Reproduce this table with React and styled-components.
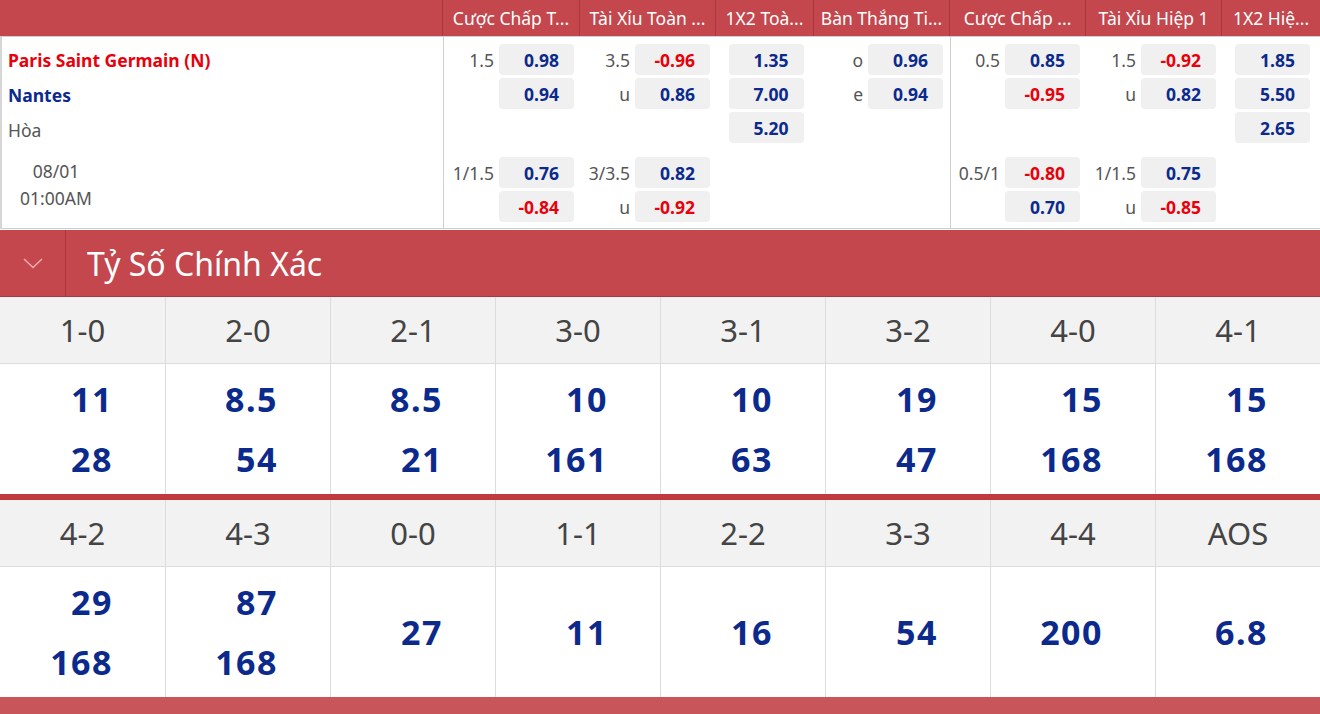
import React from 'react';
import styled, { createGlobalStyle } from 'styled-components';

const Global = createGlobalStyle`
  html, body {
    margin: 0;
    padding: 0;
    background: #fff;
  }
  body {
    font-family: "Noto Sans", "Open Sans", Arial, sans-serif;
    overflow: hidden;
  }
`;

const RED = '#c3474d';
const NAVY = '#0b2a8c';
const COLS = '442px 137px 136px 98px 136px 136px 136px 99px';

const Page = styled.div`
  width: 1320px;
  height: 714px;
  display: flex;
  flex-direction: column;
  overflow: hidden;
`;

const HeadBar = styled.div`
  display: grid;
  grid-template-columns: ${COLS};
  height: 36px;
  background: ${RED};
  border-bottom: 1px solid #cfcfcf;
`;

const HeadCell = styled.div`
  display: flex;
  align-items: center;
  justify-content: center;
  color: #fff;
  font-size: 17.5px;
  white-space: nowrap;
  overflow: hidden;
  border-left: ${(p) => (p.$first ? 'none' : '1px solid #a9383e')};
`;

const Body = styled.div`
  display: grid;
  grid-template-columns: ${COLS};
  height: 191px;
  border-bottom: 1px solid #cfcfcf;
  border-left: 2px solid #d6d6d6;
`;

const Column = styled.div`
  display: flex;
  flex-direction: column;
  gap: 13px;
  padding-top: 7px;
  border-right: ${(p) => (p.$line ? '1px solid #cfcfcf' : 'none')};
`;

const Group = styled.div`
  display: flex;
  flex-direction: column;
  gap: 3px;
  min-height: ${(p) => (p.$tall ? '100px' : '0')};
`;

const TeamColumn = styled.div`
  display: flex;
  flex-direction: column;
  padding-top: 6px;
  border-right: 1px solid #cfcfcf;
`;

const TeamLine = styled.div`
  height: 35px;
  line-height: 35px;
  padding-left: 6px;
  font-size: 17.5px;
  font-weight: ${(p) => (p.$bold ? 700 : 400)};
  color: ${(p) => p.$color};
`;

const DateBlock = styled.div`
  width: 96px;
  margin-top: 10px;
  padding-left: 6px;
  text-align: center;
  font-size: 17.5px;
  line-height: 27px;
  color: #555;
`;

const OddRow = styled.div`
  display: flex;
  align-items: center;
  justify-content: ${(p) => (p.$center ? 'center' : 'flex-end')};
  gap: 5px;
  padding-right: ${(p) => (p.$center ? '0' : '7px')};
  height: 31px;
`;

const Label = styled.span`
  font-size: 17.5px;
  color: #555;
`;

const OddBox = styled.span`
  width: 75px;
  height: 31px;
  box-sizing: border-box;
  display: flex;
  align-items: center;
  justify-content: flex-end;
  padding-right: 15px;
  background: #f0f0f0;
  border-radius: 4px;
  font-size: 17.5px;
  font-weight: 700;
  color: ${(p) => (p.$neg ? '#e8000b' : NAVY)};
`;

const SectionBar = styled.div`
  margin-top: 1px;
  height: 66px;
  display: flex;
  background: ${RED};
  border-bottom: 1px solid #a9383e;
`;

const Toggle = styled.div`
  width: 65px;
  display: flex;
  align-items: center;
  justify-content: center;
  border-right: 1px solid #a9383e;
`;

const Title = styled.div`
  display: flex;
  align-items: center;
  padding-left: 21px;
  color: #fff;
  font-size: 32px;
`;

const ScoreGrid = styled.div`
  display: grid;
  grid-template-columns: repeat(8, 1fr);
  border-bottom: ${(p) => (p.$sep ? '6px solid #c13a40' : 'none')};
`;

const ScoreHead = styled.div`
  height: 66px;
  display: flex;
  align-items: center;
  justify-content: center;
  background: #f2f2f2;
  border-bottom: 1px solid #dcdcdc;
  border-left: ${(p) => (p.$first ? 'none' : '1px solid #dcdcdc')};
  font-size: 31px;
  color: #444;
`;

const ScoreOdds = styled.div`
  height: 130px;
  display: flex;
  flex-direction: column;
  align-items: flex-end;
  justify-content: center;
  padding-right: 52px;
  border-left: ${(p) => (p.$first ? 'none' : '1px solid #dcdcdc')};
  font-size: 34px;
  font-weight: 700;
  letter-spacing: 1.5px;
  line-height: 60px;
  color: ${NAVY};
`;

const Footer = styled.div`
  flex: 1;
  background: #c8555a;
`;

const markets = [
  { title: 'Cược Chấp T...', groups: [[{ l: '1.5', v: '0.98' }, { v: '0.94' }], [{ l: '1/1.5', v: '0.76' }, { v: '-0.84' }]] },
  { title: 'Tài Xỉu Toàn ...', groups: [[{ l: '3.5', v: '-0.96' }, { l: 'u', v: '0.86' }], [{ l: '3/3.5', v: '0.82' }, { l: 'u', v: '-0.92' }]] },
  { title: '1X2 Toà...', center: true, groups: [[{ v: '1.35' }, { v: '7.00' }, { v: '5.20' }]] },
  { title: 'Bàn Thắng Ti...', line: true, groups: [[{ l: 'o', v: '0.96' }, { l: 'e', v: '0.94' }]] },
  { title: 'Cược Chấp ...', groups: [[{ l: '0.5', v: '0.85' }, { v: '-0.95' }], [{ l: '0.5/1', v: '-0.80' }, { v: '0.70' }]] },
  { title: 'Tài Xỉu Hiệp 1', groups: [[{ l: '1.5', v: '-0.92' }, { l: 'u', v: '0.82' }], [{ l: '1/1.5', v: '0.75' }, { l: 'u', v: '-0.85' }]] },
  { title: '1X2 Hiệ...', center: true, groups: [[{ v: '1.85' }, { v: '5.50' }, { v: '2.65' }]] },
];

const scoreRows = [
  [
    ['1-0', ['11', '28']], ['2-0', ['8.5', '54']], ['2-1', ['8.5', '21']], ['3-0', ['10', '161']],
    ['3-1', ['10', '63']], ['3-2', ['19', '47']], ['4-0', ['15', '168']], ['4-1', ['15', '168']],
  ],
  [
    ['4-2', ['29', '168']], ['4-3', ['87', '168']], ['0-0', ['27']], ['1-1', ['11']],
    ['2-2', ['16']], ['3-3', ['54']], ['4-4', ['200']], ['AOS', ['6.8']],
  ],
];

function Market({ m }) {
  return (
    <Column $line={m.line}>
      {m.groups.map((g, gi) => (
        <Group key={gi} $tall={gi === 0}>
          {g.map((r, ri) => (
            <OddRow key={ri} $center={m.center}>
              {r.l && <Label>{r.l}</Label>}
              <OddBox $neg={r.v.startsWith('-')}>{r.v}</OddBox>
            </OddRow>
          ))}
        </Group>
      ))}
    </Column>
  );
}

function Chevron() {
  return (
    <svg width="20" height="11" viewBox="0 0 20 11" fill="none">
      <polyline points="1,1 10,9.5 19,1" stroke="#f3a9ac" strokeWidth="1.6" />
    </svg>
  );
}

export default function App() {
  return (
    <Page>
      <Global />
      <HeadBar>
        <HeadCell $first />
        {markets.map((m) => (
          <HeadCell key={m.title}>{m.title}</HeadCell>
        ))}
      </HeadBar>
      <Body>
        <TeamColumn>
          <TeamLine $bold $color="#e8000b">Paris Saint Germain (N)</TeamLine>
          <TeamLine $bold $color={NAVY}>Nantes</TeamLine>
          <TeamLine $color="#555">Hòa</TeamLine>
          <DateBlock>
            08/01
            <br />
            01:00AM
          </DateBlock>
        </TeamColumn>
        {markets.map((m) => (
          <Market key={m.title} m={m} />
        ))}
      </Body>
      <SectionBar>
        <Toggle>
          <Chevron />
        </Toggle>
        <Title>Tỷ Số Chính Xác</Title>
      </SectionBar>
      {scoreRows.map((row, ri) => (
        <ScoreGrid key={ri} $sep={ri === 0}>
          {row.map(([label], i) => (
            <ScoreHead key={label} $first={i === 0}>{label}</ScoreHead>
          ))}
          {row.map(([label, vals], i) => (
            <ScoreOdds key={label} $first={i === 0}>
              {vals.map((v) => (
                <span key={v}>{v}</span>
              ))}
            </ScoreOdds>
          ))}
        </ScoreGrid>
      ))}
      <Footer />
    </Page>
  );
}
